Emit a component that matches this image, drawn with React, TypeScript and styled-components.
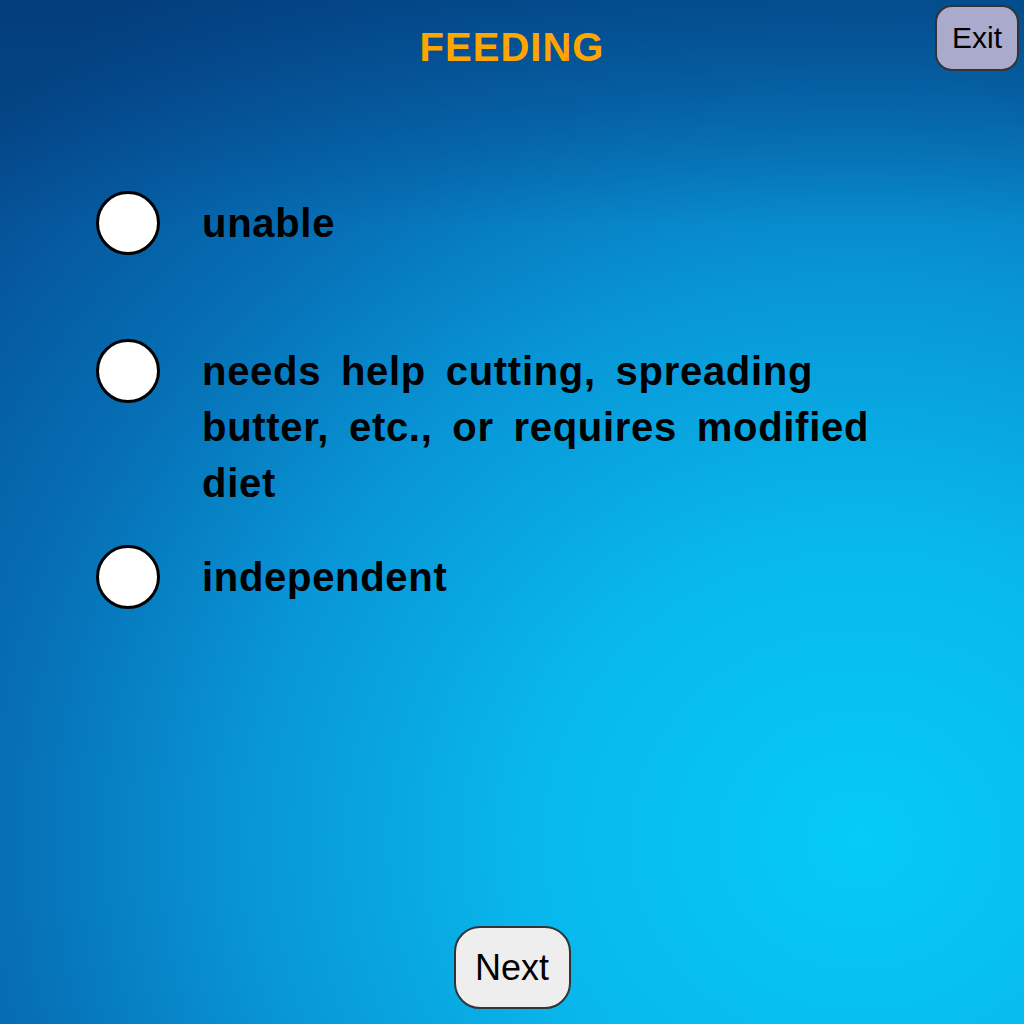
import React from "react";
import styled, { createGlobalStyle } from "styled-components";

const GlobalStyle = createGlobalStyle`
  html, body {
    margin: 0;
    padding: 0;
  }
  body {
    font-family: "Liberation Sans", Arial, sans-serif;
  }
`;

const Page = styled.div`
  position: relative;
  width: 1024px;
  height: 1024px;
  box-sizing: border-box;
  display: flex;
  flex-direction: column;
  overflow: hidden;
  background:
    linear-gradient(180deg, rgba(2, 50, 110, 0.5) 0%, rgba(2, 50, 110, 0) 22%),
    radial-gradient(ellipse 115% 105% at 84% 82%, #05cbf7 0%, #08b8ec 28%, #0896d6 52%, #0670b6 72%, #05549a 92%, #044a8a 100%);
`;

const Header = styled.header`
  display: grid;
  grid-template-columns: 1fr auto 1fr;
  align-items: start;
  padding: 5px 5px 0 5px;
`;

const Title = styled.h1`
  grid-column: 2;
  margin: 19px 0 0 0;
  font-size: 40px;
  font-weight: 700;
  letter-spacing: 1px;
  color: #ffa500;
  line-height: 46px;
`;

const ExitButton = styled.button`
  grid-column: 3;
  justify-self: end;
  width: 84px;
  height: 66px;
  background: #aaaacc;
  border: 2px solid #333;
  border-radius: 17px;
  font-family: "Liberation Sans", Arial, sans-serif;
  font-size: 30px;
  color: #000;
  padding: 0;
  cursor: pointer;
`;

const Options = styled.div`
  display: flex;
  flex-direction: column;
  gap: 34px;
  padding: 0 0 0 96px;
  margin-top: 120px;
  width: 780px;
`;

const Row = styled.label`
  display: grid;
  grid-template-columns: 64px 1fr;
  column-gap: 42px;
  align-items: start;
  min-height: 114px;
  cursor: pointer;
`;

const Radio = styled.span`
  box-sizing: border-box;
  width: 64px;
  height: 64px;
  border-radius: 50%;
  background: #fff;
  border: 3px solid #000;
`;

const OptionText = styled.span`
  padding-top: 4px;
  font-size: 40px;
  font-weight: 700;
  line-height: 56px;
  letter-spacing: 0.7px;
  word-spacing: 8px;
  color: #000;
  text-align: left;
`;

const Footer = styled.footer`
  margin-top: auto;
  display: flex;
  justify-content: center;
  padding-bottom: 15px;
`;

const NextButton = styled.button`
  width: 117px;
  height: 83px;
  background: #eeeeee;
  border: 2px solid #333;
  border-radius: 26px;
  font-family: "Liberation Sans", Arial, sans-serif;
  font-size: 36px;
  color: #000;
  padding: 0;
  cursor: pointer;
`;

const options = [
  "unable",
  "needs help cutting, spreading butter, etc., or requires modified diet",
  "independent",
];

export default function App() {
  return (
    <>
      <GlobalStyle />
      <Page>
        <Header>
          <Title>FEEDING</Title>
          <ExitButton>Exit</ExitButton>
        </Header>
        <Options>
          {options.map((o) => (
            <Row key={o}>
              <Radio />
              <OptionText>{o}</OptionText>
            </Row>
          ))}
        </Options>
        <Footer>
          <NextButton>Next</NextButton>
        </Footer>
      </Page>
    </>
  );
}
